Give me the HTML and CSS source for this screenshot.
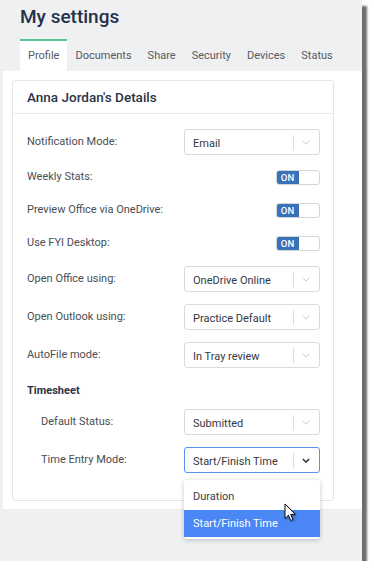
FILE: index.html
```html
<!DOCTYPE html>
<html>
<head>
<meta charset="utf-8">
<link rel="stylesheet" href="styles.css">
</head>
<body>
<div class="window">
  <div class="head">
    <h1 class="title">My settings</h1>
    <nav class="tabs">
      <span class="tab active">Profile</span>
      <span class="tab">Documents</span>
      <span class="tab">Share</span>
      <span class="tab">Security</span>
      <span class="tab">Devices</span>
      <span class="tab">Status</span>
    </nav>
  </div>
  <div class="panel">
    <section class="card">
      <header class="card-head">Anna Jordan's Details</header>
      <div class="card-body">
        <div class="row">
          <span class="label">Notification Mode:</span>
          <div class="select"><span class="value">Email</span><span class="sep"></span><svg class="chev" viewBox="0 0 10 6"><path d="M1 1l4 4 4-4"/></svg></div>
        </div>
        <div class="row row-toggle">
          <span class="label">Weekly Stats:</span>
          <div class="toggle"><span class="on">ON</span></div>
        </div>
        <div class="row row-toggle">
          <span class="label">Preview Office via OneDrive:</span>
          <div class="toggle"><span class="on">ON</span></div>
        </div>
        <div class="row row-toggle">
          <span class="label">Use FYI Desktop:</span>
          <div class="toggle"><span class="on">ON</span></div>
        </div>
        <div class="row">
          <span class="label">Open Office using:</span>
          <div class="select"><span class="value">OneDrive Online</span><span class="sep"></span><svg class="chev" viewBox="0 0 10 6"><path d="M1 1l4 4 4-4"/></svg></div>
        </div>
        <div class="row">
          <span class="label">Open Outlook using:</span>
          <div class="select"><span class="value">Practice Default</span><span class="sep"></span><svg class="chev" viewBox="0 0 10 6"><path d="M1 1l4 4 4-4"/></svg></div>
        </div>
        <div class="row">
          <span class="label">AutoFile mode:</span>
          <div class="select"><span class="value">In Tray review</span><span class="sep"></span><svg class="chev" viewBox="0 0 10 6"><path d="M1 1l4 4 4-4"/></svg></div>
        </div>
        <div class="section-title">Timesheet</div>
        <div class="row indent">
          <span class="label">Default Status:</span>
          <div class="select"><span class="value">Submitted</span><span class="sep"></span><svg class="chev" viewBox="0 0 10 6"><path d="M1 1l4 4 4-4"/></svg></div>
        </div>
        <div class="row indent">
          <span class="label">Time Entry Mode:</span>
          <div class="select-wrap">
            <div class="select focused"><span class="value">Start/Finish Time</span><span class="sep"></span><svg class="chev" viewBox="0 0 10 6"><path d="M1 1l4 4 4-4"/></svg></div>
            <ul class="menu">
              <li class="item">Duration</li>
              <li class="item selected">Start/Finish Time</li>
            </ul>
            <svg class="cursor" viewBox="0 0 12 19" width="12" height="19"><path d="M1 1v14.5l3.4-3.3 2.3 5.3 2.2-1-2.2-5.1h4.6z"/></svg>
          </div>
        </div>
      </div>
    </section>
  </div>
</div>
</body>
</html>
```

FILE: styles.css
```css
* { box-sizing: border-box; }
html, body { margin: 0; padding: 0; background: #ffffff; }
body {
  font-family: "Roboto", "Lato", sans-serif;
  color: #444;
}
.window {
  width: 362px;
  height: 561px;
  background: #eff0f2;
  padding-top: 3px;
  box-shadow: 5px 6px 2px rgba(60, 60, 60, 0.75);
}
.head { padding-left: 20px; }
.title {
  margin: 0;
  font-size: 19px;
  line-height: 28px;
  font-weight: 500;
  color: #24314a;
}
.tabs {
  display: flex;
  margin-top: 8px;
  height: 32px;
}
.tab {
  display: block;
  padding: 0 8px;
  height: 32px;
  line-height: 30px;
  border-top: 2px solid transparent;
  font-size: 11px;
  color: #555b63;
}
.tab.active {
  background: #ffffff;
  border-top-color: #5cc393;
  padding: 0 8px;
}
.panel {
  margin-left: 3px;
  background: #ffffff;
  padding: 9px 0 8px 9px;
}
.card {
  width: 322px;
  border: 1px solid #e3e5e8;
  border-radius: 3px;
}
.card-head {
  height: 33px;
  line-height: 32px;
  padding-left: 14px;
  border-bottom: 1px solid #e8eaec;
  font-size: 13.5px;
  font-weight: 500;
  color: #2b3346;
}
.card-body {
  padding: 15px 13px 27px 14px;
}
.row {
  display: flex;
  align-items: center;
  height: 26px;
  margin-bottom: 12px;
}
.row-toggle { height: 21px; }
.row.indent { padding-left: 14px; }
.row:last-child { margin-bottom: 0; }
.label {
  flex: 1;
  font-size: 11px;
  color: #4a4d52;
  margin-top: -2px;
}
.section-title {
  font-size: 11px;
  font-weight: 700;
  color: #2b3346;
  line-height: 17px;
  padding-top: 2px;
  margin-bottom: 10px;
}
.select {
  width: 136px;
  height: 26px;
  border: 1px solid #d9dbde;
  border-radius: 3px;
  background: #fff;
  display: flex;
  align-items: center;
}
.select .value {
  flex: 1;
  padding-left: 8px;
  padding-top: 3px;
  font-size: 11px;
  color: #333840;
  white-space: nowrap;
}
.select .sep {
  width: 1px;
  height: 15px;
  background: #dcdcdc;
  margin-top: 1px;
}
.chev {
  width: 8px;
  height: 5px;
  margin: 1px 9px 0 8px;
  fill: none;
  stroke: #b9bcc0;
  stroke-width: 1;
}
.select.focused {
  border: 1.5px solid #5b8ff0;
}
.select.focused .chev {
  stroke: #2e3136;
  stroke-width: 1.8;
}
.toggle {
  width: 44px;
  height: 15px;
  border: 1px solid #d2d4d7;
  border-radius: 3px;
  background: #fff;
  display: flex;
  overflow: hidden;
}
.toggle .on {
  width: 23px;
  margin: -1px 0 -1px -1px;
  background: #3a72b9;
  color: #fff;
  font-size: 9.5px;
  font-weight: 500;
  line-height: 15px;
  text-align: center;
  border-radius: 2px 0 0 2px;
}
.select-wrap {
  position: relative;
  width: 136px;
}
.menu {
  position: absolute;
  top: 33px;
  left: 0;
  width: 136px;
  margin: 0;
  padding: 3px 0 2px;
  list-style: none;
  background: #fff;
  border-radius: 3px;
  box-shadow: 0 1px 5px rgba(0, 0, 0, 0.22);
  z-index: 2;
}
.item {
  height: 27px;
  line-height: 27px;
  padding-left: 9px;
  font-size: 11px;
  color: #3a3e45;
}
.item.selected {
  background: #4a87f4;
  color: #fff;
}
.cursor {
  position: absolute;
  left: 100px;
  top: 56px;
  z-index: 3;
  fill: #fff;
  stroke: #111;
  stroke-width: 1;
  filter: drop-shadow(1px 1px 1px rgba(0,0,0,0.35));
}
```
